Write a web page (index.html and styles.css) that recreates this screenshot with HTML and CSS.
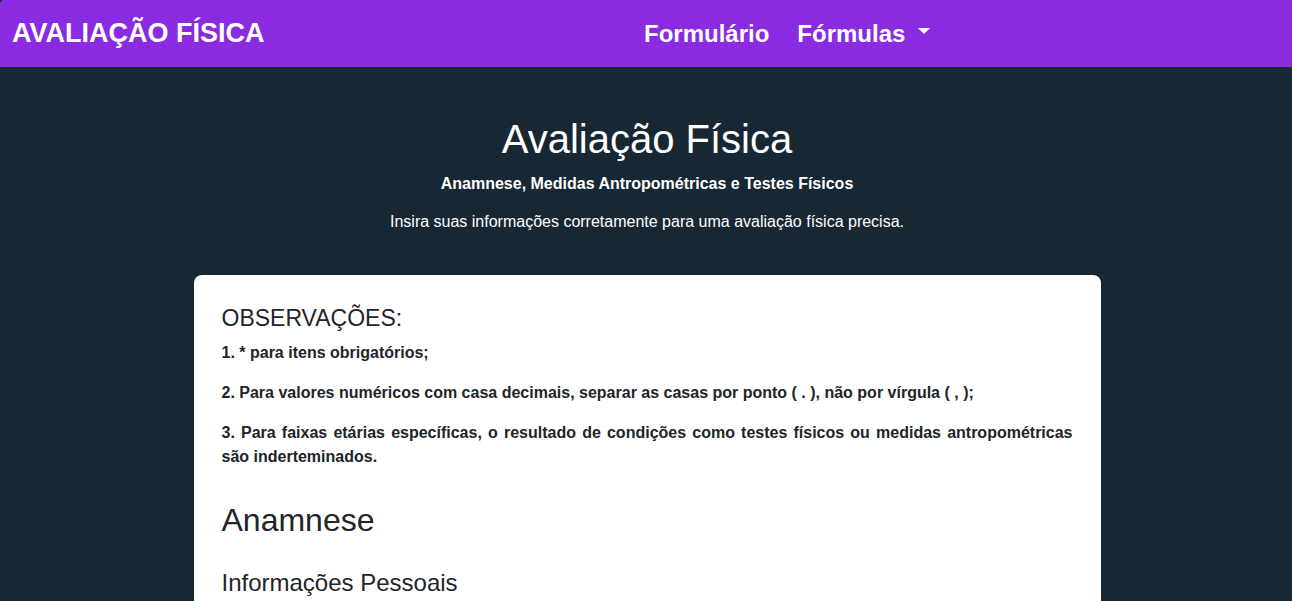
FILE: index.html
```html
<!DOCTYPE html>
<html lang="pt-BR">
<head>
<meta charset="utf-8">
<title>Avaliação Física</title>
<link rel="stylesheet" href="styles.css">
</head>
<body>
<header class="navbar">
  <a class="brand" href="#">AVALIAÇÃO FÍSICA</a>
  <nav class="nav">
    <a class="nav-link" href="#">Formulário</a>
    <a class="nav-link dropdown" href="#">Fórmulas <span class="caret"></span></a>
  </nav>
</header>
<main class="main">
  <section class="hero">
    <h1 class="hero-title">Avaliação Física</h1>
    <p class="hero-sub">Anamnese, Medidas Antropométricas e Testes Físicos</p>
    <p class="hero-text">Insira suas informações corretamente para uma avaliação física precisa.</p>
  </section>
  <section class="card">
    <h3 class="obs-title">OBSERVAÇÕES:</h3>
    <p class="obs">1. * para itens obrigatórios;</p>
    <p class="obs">2. Para valores numéricos com casa decimais, separar as casas por ponto ( . ), não por vírgula ( , );</p>
    <p class="obs">3. Para faixas etárias específicas, o resultado de condições como testes físicos ou medidas antropométricas são inderteminados.</p>
    <h2 class="section-title">Anamnese</h2>
    <h4 class="sub-title">Informações Pessoais</h4>
  </section>
</main>
</body>
</html>
```
FILE: styles.css
```css
* { box-sizing: border-box; }
html, body { margin: 0; padding: 0; }
body {
  background: #172733;
  font-family: "Liberation Sans", Arial, sans-serif;
  color: #212529;
  overflow: hidden;
}
a { text-decoration: none; }

.navbar {
  background: #8a2be2;
  height: 67px;
  padding: 0 12px;
  display: grid;
  grid-template-columns: 1fr 1fr;
  align-items: center;
  border-top-left-radius: 4px;
}
.brand {
  color: #fff;
  font-weight: bold;
  font-size: 27px;
  line-height: 1;
}
.nav {
  display: flex;
  align-items: center;
  gap: 28px;
  margin-left: -2px;
}
.nav-link {
  color: #fff;
  font-weight: bold;
  font-size: 24px;
  line-height: 1;
  display: flex;
  align-items: center;
}
.caret {
  display: inline-block;
  margin-left: 13px;
  width: 0;
  height: 0;
  border-left: 6.5px solid transparent;
  border-right: 6.5px solid transparent;
  border-top: 6px solid #fff;
  margin-top: -6px;
}

.main {
  padding: 0 0 40px 2px;
}
.hero {
  text-align: center;
  color: #fff;
  padding-top: 49px;
}
.hero-title {
  margin: 0;
  font-weight: normal;
  font-size: 40px;
  line-height: 46px;
}
.hero-sub {
  margin: 13px 0 0;
  font-weight: bold;
  font-size: 16px;
  line-height: 18px;
}
.hero-text {
  margin: 19px 0 0;
  font-size: 16px;
  line-height: 20px;
}

.card {
  background: #fff;
  width: 907px;
  margin: 43px auto 0;
  border-radius: 8px;
  padding: 27px 28px 20px;
}
.obs-title {
  margin: 0 0 7px;
  font-weight: normal;
  font-size: 23px;
  line-height: 32px;
}
.obs {
  margin: 0 0 16px;
  font-weight: bold;
  font-size: 16px;
  line-height: 24px;
  text-align: justify;
}
.section-title {
  margin: 32px 0 0;
  font-weight: normal;
  font-size: 32px;
  line-height: 38px;
}
.sub-title {
  margin: 30px 0 0;
  font-weight: normal;
  font-size: 24px;
  line-height: 28px;
}
```
